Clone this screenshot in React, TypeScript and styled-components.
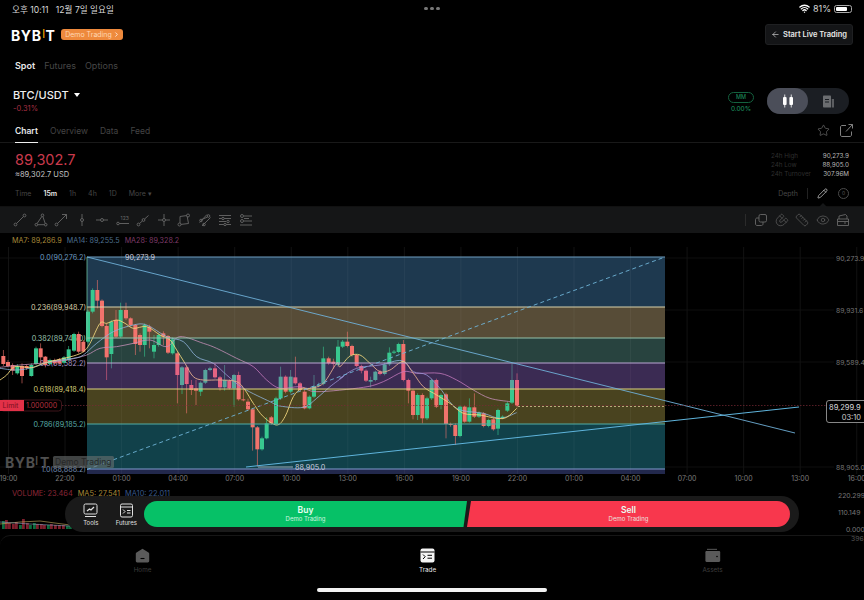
import React from "react";
import styled, { createGlobalStyle } from "styled-components";
import { ArrowLeft, ChevronRight, Eye, Magnet, Pencil, Ruler, Star, Wifi } from "lucide-react";

const GlobalStyle = createGlobalStyle`
  html, body {
    margin: 0;
    background: #000;
    overflow: hidden;
  }
  * { box-sizing: border-box; }
`;

const Page = styled.div`
  width: 864px;
  height: 600px;
  background: #000;
  color: #fff;
  font-family: Inter, "Noto Sans CJK KR", sans-serif;
  display: flex;
  flex-direction: column;
  overflow: hidden;
`;

const StatusBar = styled.div`
  height: 18px;
  padding: 0 12px 1px 12px;
  display: grid;
  grid-template-columns: 1fr auto 1fr;
  align-items: center;
  font-size: 8.6px;
  color: #d8d8d8;
`;
const Dots = styled.div`
  display: flex;
  gap: 2.5px;
  i {
    width: 3.5px;
    height: 3.5px;
    border-radius: 50%;
    background: #777;
  }
`;
const StatusRight = styled.div`
  display: flex;
  justify-content: flex-end;
  align-items: center;
  gap: 3px;
  font-size: 9px;
`;
const Battery = styled.div`
  width: 18px;
  height: 8px;
  border: 1px solid #aaa;
  border-radius: 2.5px;
  padding: 1px;
  position: relative;
  div {
    width: 81%;
    height: 100%;
    background: #fff;
    border-radius: 1px;
  }
`;

const Header = styled.div`
  height: 32px;
  padding: 0 11px 0 11px;
  display: flex;
  align-items: center;
  justify-content: space-between;
`;
const Brand = styled.div`
  display: flex;
  align-items: center;
  gap: 6px;
`;
const Logo = styled.div`
  font-size: 14px;
  font-weight: 700;
  letter-spacing: 0.6px;
  color: #fff;
  line-height: 1;
  padding-top: 3px;
  span {
    display: inline-block;
    color: #f7a600;
    font-size: 12px;
    font-weight: 600;
    transform: translateY(-3px) scaleX(0.7);
  }
`;
const DemoBadge = styled.div`
  height: 11px;
  width: 62px;
  background: #ee8a3d;
  color: #ffd8b4;
  font-size: 7px;
  border-radius: 3px;
  display: flex;
  align-items: center;
  justify-content: center;
  gap: 1px;
`;
const LiveButton = styled.div`
  width: 88px;
  height: 21px;
  background: #141517;
  border: 1px solid #1f2022;
  border-radius: 3px;
  display: flex;
  align-items: center;
  justify-content: center;
  gap: 3px;
  font-size: 7.5px;
  font-weight: 600;
  color: #e8e8e8;
`;

const MarketTabs = styled.div`
  height: 18px;
  margin-top: 6px;
  padding-left: 15px;
  display: flex;
  align-items: center;
  gap: 9px;
`;
const MarketTab = styled.div<{ $active?: boolean }>`
  font-size: 9px;
  font-weight: ${(p) => (p.$active ? 600 : 400)};
  color: ${(p) => (p.$active ? "#e8e8e8" : "#474747")};
`;

const PairRow = styled.div`
  height: 46px;
  padding: 14px 15px 0 13px;
  display: flex;
  align-items: flex-start;
  justify-content: space-between;
`;
const PairName = styled.div`
  font-size: 11px;
  font-weight: 500;
  color: #eee;
  display: flex;
  align-items: center;
  gap: 5px;
  &::after {
    content: "";
    border-left: 3.5px solid transparent;
    border-right: 3.5px solid transparent;
    border-top: 4px solid #fff;
  }
`;
const PairChange = styled.div`
  font-size: 7.5px;
  color: #a52f42;
  margin-top: 2px;
`;
const PairRight = styled.div`
  display: flex;
  align-items: center;
  gap: 13px;
`;
const MmBlock = styled.div`
  display: flex;
  flex-direction: column;
  align-items: center;
  gap: 2px;
  padding-top: 2px;
  font-size: 6.5px;
  color: #1f9a63;
`;
const MmBadge = styled.div`
  width: 26px;
  height: 11px;
  border: 1px solid #14613f;
  border-radius: 6px;
  font-size: 5.5px;
  display: flex;
  align-items: center;
  justify-content: center;
`;
const ViewToggle = styled.div`
  width: 82px;
  height: 26px;
  border-radius: 13px;
  background: #1b1e23;
  display: flex;
`;
const ToggleSide = styled.div<{ $on?: boolean }>`
  width: 41px;
  height: 26px;
  border-radius: 13px;
  background: ${(p) => (p.$on ? "#4b4e59" : "transparent")};
  display: flex;
  align-items: center;
  justify-content: center;
`;

const ChartTabs = styled.div`
  height: 23px;
  padding: 0 11px 0 15px;
  border-bottom: 1px solid #191919;
  display: flex;
  align-items: stretch;
  justify-content: space-between;
`;
const TabList = styled.div`
  display: flex;
  gap: 12px;
`;
const ChartTab = styled.div<{ $active?: boolean }>`
  font-size: 8.5px;
  font-weight: ${(p) => (p.$active ? 600 : 400)};
  color: ${(p) => (p.$active ? "#e8e8e8" : "#444")};
  border-bottom: 1px solid ${(p) => (p.$active ? "#eee" : "transparent")};
  display: flex;
  align-items: center;
  padding-bottom: 1px;
  margin-bottom: -1px;
`;
const TabActions = styled.div`
  display: flex;
  align-items: center;
  gap: 10px;
  color: #808080;
  padding-bottom: 1px;
`;

const PriceRow = styled.div`
  height: 43px;
  padding: 7px 15px 0 15px;
  display: flex;
  justify-content: space-between;
`;
const LastPrice = styled.div`
  font-size: 14.5px;
  line-height: 20px;
  color: #c93a4c;
`;
const FiatPrice = styled.div`
  font-size: 7.5px;
  color: #c4c4c4;
`;
const Stats = styled.div`
  width: 78px;
  height: 28px;
  padding-top: 2px;
  display: grid;
  grid-template-columns: 1fr auto;
  align-content: start;
  font-size: 6.3px;
  line-height: 8.8px;
`;
const StatLabel = styled.div`
  color: #2f2f2f;
`;
const StatValue = styled.div`
  color: #b8b8b8;
  text-align: right;
`;

const TimeRow = styled.div`
  height: 20px;
  padding: 0 15px 6px 15px;
  display: flex;
  align-items: center;
  justify-content: space-between;
  font-size: 7px;
  color: #474747;
`;
const TimeList = styled.div`
  display: flex;
  gap: 12px;
`;
const TimeItem = styled.div<{ $active?: boolean }>`
  color: ${(p) => (p.$active ? "#e8e8e8" : "#474747")};
  font-weight: ${(p) => (p.$active ? 600 : 400)};
`;
const TimeTools = styled.div`
  display: flex;
  align-items: center;
`;
const DepthLabel = styled.span`
  margin-right: 9px;
`;
const VLine = styled.div`
  width: 1px;
  height: 11px;
  background: #222;
`;
const PencilBox = styled.div`
  margin: 0 0 0 9px;
  width: 12px;
  color: #e4e4e4;
  display: flex;
`;
const CircleBadge = styled.div`
  margin-left: 9px;
  width: 11px;
  height: 11px;
  border: 1px solid #4a4a4a;
  border-radius: 50%;
  font-size: 5px;
  color: #5a5a5a;
  display: flex;
  align-items: center;
  justify-content: center;
`;

const Toolbar = styled.div`
  height: 27px;
  background: #151617;
  border-top: 1px solid #111;
  padding: 0 14px 0 13px;
  display: flex;
  align-items: center;
  justify-content: space-between;
  position: relative;
  &::before {
    content: "";
    position: absolute;
    top: -4px;
    left: 819px;
    border-left: 4px solid transparent;
    border-right: 4px solid transparent;
    border-bottom: 4px solid #151617;
  }
`;
const ToolGroup = styled.div`
  display: flex;
  align-items: center;
  gap: 6.5px;
`;
const ToolIcon = styled.svg`
  width: 14px;
  height: 14px;
  fill: none;
  stroke: #686868;
  stroke-width: 0.9;
  display: block;
`;
const ToolDivider = styled.div`
  width: 1px;
  height: 12px;
  background: #2b2b2b;
  margin-right: 2px;
`;
const MagnetIcon = styled(Magnet)`
  transform: rotate(180deg);
`;

const Legend = styled.div`
  height: 14px;
  padding-left: 12px;
  display: flex;
  align-items: center;
  gap: 5px;
  font-size: 7.2px;
`;
const LegendItem = styled.span<{ $color: string }>`
  color: ${(p) => p.$color};
`;
const ChartSvg = styled.svg`
  display: block;
  width: 864px;
  height: 240px;
`;
const SvgLabel = styled.text<{ $size?: number; $color: string; $weight?: number }>`
  font-family: Inter, sans-serif;
  font-size: ${(p) => p.$size ?? 7.2}px;
  font-weight: ${(p) => p.$weight ?? 400};
  fill: ${(p) => p.$color};
`;

const VolumePanel = styled.div`
  height: 48px;
  position: relative;
`;
const VolumeLegend = styled(Legend)`
  height: 12px;
  padding-top: 1px;
  font-size: 7.4px;
`;
const VolumeSvg = styled.svg`
  display: block;
  width: 864px;
  height: 36px;
  overflow: visible;
`;
const TradeBar = styled.div`
  position: absolute;
  left: 65px;
  top: 9px;
  width: 734px;
  height: 36px;
  border-radius: 18px;
  background: #1a1a1a;
  display: flex;
  align-items: center;
`;
const BarTools = styled.div`
  width: 79px;
  padding-left: 8px;
  display: flex;
`;
const BarTool = styled.div`
  width: 35.5px;
  display: flex;
  flex-direction: column;
  align-items: center;
  gap: 1px;
  font-size: 6px;
  color: #e0e0e0;
`;
const TradeButton = styled.div<{ $side: "buy" | "sell" }>`
  width: 323px;
  height: 26px;
  background: ${(p) => (p.$side === "buy" ? "#06c167" : "#f8374d")};
  border-radius: ${(p) => (p.$side === "buy" ? "13px 0 0 13px" : "0 13px 13px 0")};
  clip-path: ${(p) =>
    p.$side === "buy"
      ? "polygon(0 0, 100% 0, calc(100% - 3.5px) 100%, 0 100%)"
      : "polygon(4px 0, 100% 0, 100% 100%, 0 100%)"};
  display: flex;
  flex-direction: column;
  align-items: center;
  justify-content: center;
  color: #e9fff3;
  b {
    font-size: 8.5px;
    font-weight: 600;
    line-height: 10px;
  }
  span {
    font-size: 6px;
    line-height: 8px;
    opacity: 0.85;
  }
`;

const BottomNav = styled.div`
  height: 65px;
  border-top: 1px solid #161616;
  border-radius: 10px 10px 0 0;
  display: flex;
  flex-direction: column;
  align-items: center;
`;
const NavItems = styled.div`
  width: 100%;
  padding-top: 12px;
  display: grid;
  grid-template-columns: repeat(3, 285px);
`;
const NavItem = styled.div<{ $active?: boolean }>`
  display: flex;
  flex-direction: column;
  align-items: center;
  gap: 3px;
  font-size: 6.3px;
  color: ${(p) => (p.$active ? "#e8e8e8" : "#3f3f3f")};
`;
const HomeBar = styled.div`
  width: 230px;
  height: 4px;
  margin-top: 14px;
  background: #f2f2f2;
  border-radius: 2px;
`;

type Row = [number, number, number, number, number, number];

// values read off the chart: x in px, then body top/bottom and wick top/bottom. last one 1 = green
const rowsA: Row[] = [
  [10, 228, 252, 210, 258, 0], [24, 246, 258, 240, 262, 0], [38, 255, 272, 250, 285, 0], [52, 258, 280, 252, 284, 1],
  [66, 258, 288, 250, 310, 0], [80, 258, 264, 254, 270, 0], [94, 255, 288, 250, 290, 1], [108, 205, 252, 200, 256, 1],
  [122, 205, 232, 190, 250, 0], [136, 230, 255, 228, 262, 0], [150, 240, 252, 236, 256, 1], [164, 240, 250, 236, 254, 0],
  [178, 238, 250, 234, 254, 0], [192, 232, 248, 228, 252, 1], [206, 208, 240, 198, 244, 1], [222, 162, 212, 158, 216, 1],
  [236, 162, 215, 155, 220, 0], [250, 185, 215, 180, 218, 0], [264, 95, 185, 90, 190, 1], [278, 30, 95, 25, 100, 1],
  [292, 30, 62, 0, 85, 0], [306, 62, 138, 58, 142, 0], [320, 138, 232, 130, 300, 0], [334, 125, 222, 120, 265, 1],
  [348, 120, 170, 90, 174, 0], [362, 90, 170, 68, 174, 1], [378, 90, 115, 68, 120, 0], [392, 115, 135, 112, 140, 0],
  [406, 135, 192, 132, 225, 0], [420, 165, 195, 160, 215, 0], [434, 135, 195, 130, 230, 1], [448, 140, 155, 134, 205, 0],
  [462, 195, 215, 165, 235, 1], [476, 165, 195, 160, 200, 1], [490, 160, 170, 154, 195, 0], [504, 168, 218, 165, 222, 0],
  [518, 178, 220, 172, 224, 1],
];
const rowsB: Row[] = [
  [22, 100, 165, 96, 250, 0], [36, 142, 195, 138, 222, 1], [50, 142, 192, 138, 280, 0], [64, 195, 210, 180, 225, 0],
  [78, 205, 212, 180, 255, 0], [92, 188, 215, 184, 228, 1], [106, 150, 188, 146, 192, 1], [120, 145, 150, 140, 154, 1],
  [135, 145, 172, 130, 176, 0], [150, 172, 202, 168, 212, 0], [164, 180, 202, 135, 212, 1], [178, 182, 205, 178, 208, 0],
  [192, 165, 205, 162, 260, 1], [206, 165, 238, 155, 242, 0], [220, 238, 241, 205, 244, 0], [234, 245, 268, 236, 272, 0],
  [248, 268, 322, 264, 392, 0], [262, 322, 388, 318, 440, 0], [276, 355, 388, 350, 392, 1], [290, 310, 355, 292, 358, 1],
  [304, 292, 310, 288, 314, 0], [318, 235, 312, 230, 316, 1], [332, 170, 235, 140, 240, 1], [347, 170, 215, 166, 220, 0],
  [362, 170, 215, 150, 220, 1], [376, 172, 190, 110, 194, 0], [390, 190, 210, 186, 214, 0], [404, 215, 265, 210, 268, 0],
  [418, 230, 265, 226, 268, 1], [432, 198, 230, 165, 234, 1], [446, 195, 198, 188, 202, 1], [460, 115, 192, 80, 196, 1],
  [476, 115, 130, 110, 134, 0], [490, 125, 132, 116, 146, 0], [504, 80, 135, 60, 140, 1],
];
const rowsC: Row[] = [
  [8, 35, 50, 30, 54, 1], [22, 35, 48, 5, 52, 0], [36, 48, 75, 44, 80, 0], [50, 75, 108, 72, 112, 0], [64, 108, 122, 104, 130, 0],
  [78, 122, 152, 118, 156, 0], [92, 150, 155, 140, 172, 1], [106, 125, 150, 122, 154, 1], [120, 125, 132, 120, 136, 0],
  [134, 103, 132, 98, 136, 1], [148, 68, 103, 52, 108, 1], [162, 65, 68, 60, 72, 1], [176, 42, 66, 38, 70, 1],
  [190, 42, 150, 30, 154, 0], [205, 150, 182, 146, 220, 0], [219, 182, 255, 178, 268, 0], [233, 195, 255, 190, 270, 1],
  [247, 195, 265, 190, 280, 0], [261, 205, 265, 200, 270, 1], [275, 150, 205, 146, 210, 1], [289, 150, 230, 146, 234, 0],
  [303, 195, 225, 190, 238, 1], [318, 193, 282, 188, 325, 0], [332, 282, 285, 278, 290, 0], [346, 285, 318, 280, 345, 0],
  [360, 230, 318, 226, 322, 1], [374, 230, 275, 226, 278, 0], [388, 232, 275, 205, 278, 1], [403, 232, 260, 190, 264, 0],
  [417, 248, 260, 244, 264, 1], [431, 250, 288, 246, 292, 0], [446, 270, 288, 266, 292, 1], [460, 268, 298, 264, 302, 0],
  [474, 240, 296, 236, 315, 1], [488, 260, 264, 256, 268, 1], [502, 220, 242, 216, 246, 1], [516, 150, 218, 100, 222, 1],
  [531, 150, 228, 130, 232, 0],
];

const place = (rows: Row[], ox: number, oy: number) =>
  rows.map(([v, t, b, wt, wb, g]) => ({
    x: ox + v / 3,
    top: oy + t / 3,
    bottom: oy + b / 3,
    high: oy + wt / 3,
    low: oy + wb / 3,
    up: g === 1,
  }));

const candles = [...place(rowsA, 0, 280), ...place(rowsB, 170, 320), ...place(rowsC, 340, 330)];

const toPath = (parts: [number, number, number[]][]) => {
  const pts: number[][] = [];
  parts.forEach(([ox, oy, flat]) => {
    for (let i = 0; i < flat.length; i += 2) pts.push([ox + flat[i] / 3, oy + flat[i + 1] / 3]);
  });
  let d = `M${pts[0][0]} ${pts[0][1]}`;
  for (let i = 0; i < pts.length - 1; i++) {
    const p0 = pts[i - 1] || pts[i];
    const p1 = pts[i];
    const p2 = pts[i + 1];
    const p3 = pts[i + 2] || p2;
    d += ` C${p1[0] + (p2[0] - p0[0]) / 6} ${p1[1] + (p2[1] - p0[1]) / 6} ${p2[0] - (p3[0] - p1[0]) / 6} ${p2[1] - (p3[1] - p1[1]) / 6} ${p2[0]} ${p2[1]}`;
  }
  return d;
};

const ma7 = toPath([
  [0, 280, [0, 300, 20, 285, 40, 262, 60, 260, 80, 262, 100, 262, 130, 250, 170, 240, 220, 228, 250, 215, 270, 190, 300, 130, 320, 130, 350, 120, 375, 130, 400, 145, 440, 140, 480, 165, 510, 180]],
  [170, 320, [20, 90, 45, 130, 70, 170, 100, 180, 150, 180, 200, 185, 225, 210, 250, 250, 280, 290, 320, 315, 345, 290, 370, 230, 395, 205, 420, 205, 460, 190, 500, 130]],
  [340, 330, [0, 110, 30, 78, 60, 75, 90, 100, 120, 125, 150, 120, 190, 95, 220, 130, 250, 170, 290, 195, 330, 220, 370, 250, 420, 255, 470, 265, 500, 262, 530, 235]],
]);
const ma14 = toPath([
  [0, 280, [0, 265, 50, 270, 100, 262, 150, 245, 220, 235, 250, 225, 290, 190, 340, 155, 400, 135, 440, 135, 500, 170]],
  [170, 320, [40, 65, 80, 110, 130, 130, 170, 165, 220, 205, 300, 245, 330, 258, 400, 262, 440, 235, 480, 200, 520, 170]],
  [340, 330, [0, 145, 50, 115, 120, 105, 185, 92, 220, 125, 260, 135, 300, 175, 350, 235, 430, 250, 480, 265, 530, 248]],
]);
const ma28 = toPath([
  [0, 280, [0, 262, 60, 255, 120, 250, 200, 240, 260, 225, 300, 205, 350, 200, 400, 190, 450, 180, 500, 200]],
  [170, 320, [30, 50, 100, 70, 140, 85, 200, 115, 250, 140, 290, 180, 330, 205, 390, 200, 440, 215]],
  [340, 330, [70, 172, 130, 155, 190, 125, 230, 130, 300, 130, 350, 150, 400, 180, 450, 205, 510, 215]],
]);

const bands = [
  { top: 257, bottom: 307, fill: "#1e394f", line: "#6f9fc2", label: "0.0(90,276.2)", text: "#6d9cc0" },
  { top: 307, bottom: 338, fill: "#574c37", line: "#d9d2ac", label: "0.236(89,948.7)", text: "#d8cfa8" },
  { top: 338, bottom: 363, fill: "#28433f", line: "#94c2ab", label: "0.382(89,746.0)", text: "#9cc4b0" },
  { top: 363, bottom: 389, fill: "#13292f", tint: "rgba(190,50,200,.24)", line: "#baa7d4", label: "0.5(89,582.2)", text: "#a994c8" },
  { top: 389, bottom: 424, fill: "#49431f", line: "#dcd47e", label: "0.618(89,418.4)", text: "#d4cc78" },
  { top: 424, bottom: 469, fill: "#11414a", line: "#52ada5", label: "0.786(89,185.2)", text: "#5aaca8" },
  { top: 469, bottom: 474, fill: "#22284c", line: "#8299cf", label: "1.0(88,888.2)", text: "#7088b0" },
];

const gridX = Array.from({ length: 16 }, (_, i) => 8.5 + i * 56.55);
const timeLabels = ["19:00", "22:00", "01:00", "04:00", "07:00", "10:00", "13:00", "16:00", "19:00", "22:00", "01:00", "04:00", "07:00", "10:00", "13:00", "16:00"];

const Chart = () => (
  <ChartSvg viewBox="0 247 864 240">
    {gridX.map((x) => (
      <line key={x} x1={x} x2={x} y1={247} y2={474} stroke="#1a1a1a" strokeWidth={0.7} />
    ))}
    {[258, 310, 362, 467].map((y) => (
      <line key={y} x1={0} x2={834} y1={y} y2={y} stroke="#141414" strokeWidth={0.7} />
    ))}
    {bands.map((b) => (
      <rect key={b.label} x={87} y={b.top} width={578} height={b.bottom - b.top} fill={b.fill} />
    ))}
    {gridX
      .filter((x) => x > 87 && x < 665)
      .map((x) => (
        <line key={x} x1={x} x2={x} y1={257} y2={474} stroke="rgba(255,255,255,.07)" strokeWidth={0.7} />
      ))}
    {bands.map((b) => (
      <SvgLabel key={b.label} x={86} y={b.top + 2.6} textAnchor="end" $color={b.text}>
        {b.label}
      </SvgLabel>
    ))}
    {candles.map((c) => (
      <g key={`${c.x}-${c.top}`} fill={c.up ? "#38c88f" : "#f2736c"}>
        <rect x={c.x - 0.4} y={c.high} width={0.8} height={c.low - c.high} opacity={0.75} />
        <rect x={c.x - 2} y={c.top} width={4} height={Math.max(c.bottom - c.top, 1)} />
      </g>
    ))}
    <path d={ma28} fill="none" stroke="#c58fb8" strokeWidth={0.8} />
    <path d={ma14} fill="none" stroke="#8fb4dc" strokeWidth={0.8} />
    <path d={ma7} fill="none" stroke="#ecd27a" strokeWidth={0.9} />
    {bands
      .filter((b) => b.tint)
      .map((b) => (
        <rect key={b.label} x={87} y={b.top} width={578} height={b.bottom - b.top} fill={b.tint} />
      ))}
    {bands.map((b) => (
      <line key={b.label} x1={87} x2={665} y1={b.top} y2={b.top} stroke={b.line} strokeWidth={1} />
    ))}
    <line x1={87} x2={87} y1={257} y2={340} stroke="#6cc0a0" strokeWidth={0.8} />
    <line x1={87} x2={665} y1={469.5} y2={257} stroke="#6fb4d8" strokeWidth={0.9} strokeDasharray="4 3" />
    <line x1={87} x2={795} y1={257} y2={433} stroke="#6fb0d8" strokeWidth={0.9} />
    <line x1={246} x2={799} y1={467} y2={407} stroke="#5fb4dc" strokeWidth={1} />
    <line x1={258} x2={293} y1={467} y2={467} stroke="#dde" strokeWidth={0.7} />
    <line x1={62} x2={830} y1={405.5} y2={405.5} stroke="#7a2a35" strokeWidth={0.7} strokeDasharray="1.5 1.5" />
    <line x1={518} x2={665} y1={406.5} y2={406.5} stroke="#e8d9a0" strokeWidth={0.7} strokeDasharray="2 2" />
    <SvgLabel x={125} y={260} $color="#ccd">90,273.9</SvgLabel>
    <SvgLabel x={295} y={469.5} $color="#ccd">88,905.0</SvgLabel>

    <rect x={0.5} y={400} width={61} height={11} rx={3} fill="#000" stroke="#4e1a22" strokeWidth={0.8} />
    <path d="M0 400 H24 V411 H0 Z" fill="#e23148" />
    <SvgLabel x={2.5} y={408.2} $size={7} $color="#7a0f20">Limit</SvgLabel>
    <SvgLabel x={26} y={408.2} $size={7} $color="#b5303f">1.000000</SvgLabel>

    <SvgLabel x={5} y={468} $size={14} $weight={700} $color="#6a6a6a" opacity={0.75} letterSpacing={0.6}>BYB</SvgLabel>
    <SvgLabel x={35} y={465} $size={12} $weight={500} $color="#6a6a6a" opacity={0.75}>I</SvgLabel>
    <SvgLabel x={40} y={468} $size={14} $weight={700} $color="#6a6a6a" opacity={0.75}>T</SvgLabel>
    <rect x={53} y={456} width={61} height={12} rx={1.5} fill="#6a6f70" opacity={0.6} />
    <SvgLabel x={55} y={465} $size={8.5} $color="#222" opacity={0.85}>Demo Trading</SvgLabel>

    {timeLabels.map((t, i) => (
      <SvgLabel key={i} x={gridX[i]} y={481} textAnchor="middle" $size={7} $color="#7a7a7a">
        {t}
      </SvgLabel>
    ))}
    <SvgLabel x={836} y={260.5} $size={6.8} $color="#777">90,273.9</SvgLabel>
    <SvgLabel x={836} y={312.5} $size={6.8} $color="#777">89,931.6</SvgLabel>
    <SvgLabel x={836} y={364.5} $size={6.8} $color="#777">89,589.4</SvgLabel>
    <SvgLabel x={836} y={469.5} $size={6.8} $color="#777">88,905.0</SvgLabel>

    <rect x={826.5} y={400.5} width={44} height={22} rx={2.5} fill="#000" stroke="#aaa" strokeWidth={0.8} />
    <SvgLabel x={829} y={409.5} $size={7.5} $color="#ddd">89,299.9</SvgLabel>
    <SvgLabel x={861} y={419.5} $size={7.5} $color="#ccc" textAnchor="end">03:10</SvgLabel>
  </ChartSvg>
);

const volumeBars = [
  [2, 521, 1], [5, 520, 0], [8, 523, 0], [12, 524, 0], [15, 522, 0], [19, 525, 1], [22, 519, 0], [26, 523, 0], [29, 525, 1], [33, 523, 1],
  [36, 524, 0], [40, 524, 0], [43, 525, 0], [47, 525, 1], [50, 524, 0], [54, 525, 0], [58, 525, 0], [62, 525, 0], [66, 526, 1], [69, 525, 1],
];

const Volume = () => (
  <VolumeSvg viewBox="0 499 864 36">
    {volumeBars.map(([x, y, up]) => (
      <rect key={x} x={x} y={y} width={2.8} height={529 - y} fill={up ? "#0e6a3e" : "#7c1f2c"} />
    ))}
    <polyline points="0,524 20,522 40,521 70,525" fill="none" stroke="#c9b060" strokeWidth={0.6} />
    <polyline points="0,522 30,524 70,526" fill="none" stroke="#8aa0c0" strokeWidth={0.6} />
    <SvgLabel x={838} y={497.5} $size={6.8} $color="#777">220.299</SvgLabel>
    <SvgLabel x={838} y={514.5} $size={6.8} $color="#777">110.149</SvgLabel>
    <SvgLabel x={846} y={531.5} $size={6.8} $color="#777">0.000</SvgLabel>
    <SvgLabel x={851} y={540.5} $size={6.8} $color="#555">396</SvgLabel>
  </VolumeSvg>
);

const Tool = ({ children }: { children: React.ReactNode }) => <ToolIcon viewBox="0 0 14 14">{children}</ToolIcon>;

const leftTools = [
  <><circle cx="2.5" cy="11.5" r="1.4" /><circle cx="11.5" cy="2.5" r="1.4" /><path d="M3.5 10.5 10.5 3.5" /></>,
  <><circle cx="2.3" cy="11.7" r="1.3" /><circle cx="11.7" cy="11.7" r="1.3" /><circle cx="8.5" cy="2.3" r="1.3" /><path d="M3.6 11.7H10.4M3 10.6 7.9 3.4M8.9 3.6 11.2 10.4" /></>,
  <><circle cx="2.5" cy="11.5" r="1.4" /><path d="M3.5 10.5 12.5 1.5M8 1.5H12.5V6" /></>,
  <><circle cx="7" cy="7" r="1.5" /><path d="M7 1V5.5M7 8.5V13" /></>,
  <><circle cx="7" cy="7" r="1.5" /><path d="M1 7H5.5M8.5 7H13" /></>,
  <><circle cx="2" cy="10.5" r="1.3" /><path d="M3.3 10.5H13" /><text x="4.6" y="7" fontSize="5" fill="#686868" stroke="none" fontFamily="Inter, sans-serif">123</text></>,
  <><circle cx="2.5" cy="11.5" r="1.4" /><circle cx="7.5" cy="7" r="1.4" /><path d="M3.5 10.5 6.4 8M8.6 6 12.5 2.5" /></>,
  <><circle cx="7" cy="7" r="1.5" /><path d="M7 1V5.5M7 8.5V13M1 7H5.5M8.5 7H13" /></>,
  <><path d="M3 3.5 10 2.5 11.5 10.5 3 11.5Z" /><circle cx="11" cy="2.5" r="1.5" fill="#151617" /><circle cx="2.5" cy="11.5" r="1.5" fill="#151617" /></>,
  <><circle cx="3" cy="7.5" r="1.3" /><circle cx="10.5" cy="3" r="1.3" /><circle cx="6" cy="11.5" r="1.3" /><path d="M1.5 9.5 9 1.5M4 13 12.5 4.5M4 6.5 9.5 4" /></>,
  <><path d="M1 2.5H13M1 5.5H13M1 8.5H8M1 11.5H13" /><circle cx="5" cy="5.5" r="1.2" fill="#151617" /><circle cx="10" cy="8.5" r="1.2" fill="#151617" /><circle cx="7" cy="11.5" r="1.2" fill="#151617" /></>,
  <><circle cx="3" cy="3" r="1.5" /><circle cx="3" cy="8" r="1.5" /><path d="M5 3H13M5 8H13M1 12H13M5 5.5H10" /></>,
];

const TimeFrames = ["Time", "15m", "1h", "4h", "1D", "More ▾"];

export default function App() {
  return (
    <Page>
      <GlobalStyle />
      <StatusBar>
        <div>오후 10:11 &nbsp; 12월 7일 일요일</div>
        <Dots><i /><i /><i /></Dots>
        <StatusRight>
          <Wifi size={11} color="#fff" strokeWidth={3} />
          <span>81%</span>
          <Battery><div /></Battery>
        </StatusRight>
      </StatusBar>

      <Header>
        <Brand>
          <Logo>BYB<span>I</span>T</Logo>
          <DemoBadge>Demo Trading <ChevronRight size={7} strokeWidth={2.5} color="#fff" /></DemoBadge>
        </Brand>
        <LiveButton><ArrowLeft size={9} strokeWidth={1.6} /> Start Live Trading</LiveButton>
      </Header>

      <MarketTabs>
        <MarketTab $active>Spot</MarketTab>
        <MarketTab>Futures</MarketTab>
        <MarketTab>Options</MarketTab>
      </MarketTabs>

      <PairRow>
        <div>
          <PairName>BTC/USDT</PairName>
          <PairChange>-0.31%</PairChange>
        </div>
        <PairRight>
          <MmBlock>
            <MmBadge>MM</MmBadge>
            0.00%
          </MmBlock>
          <ViewToggle>
            <ToggleSide $on>
              <svg width="12" height="14" viewBox="0 0 12 14" fill="#fff">
                <rect x="1" y="3" width="3.6" height="8" rx="1" />
                <rect x="2.4" y="0.5" width="0.8" height="13" />
                <rect x="7.4" y="3" width="3.6" height="8" rx="1" />
                <rect x="8.8" y="0.5" width="0.8" height="13" />
              </svg>
            </ToggleSide>
            <ToggleSide>
              <svg width="13" height="13" viewBox="0 0 13 13">
                <path d="M1 1.5C1 1 1.4 .5 2 .5H8C8.6.5 9 1 9 1.5V12.5H2C1.4 12.5 1 12 1 11.5Z" fill="#6b6d70" />
                <path d="M3 4.5H7M3 7H7" stroke="#1b1e23" strokeWidth="1" />
                <path d="M9.8 4H12V12.5H9.8Z" fill="#5b5d60" />
              </svg>
            </ToggleSide>
          </ViewToggle>
        </PairRight>
      </PairRow>

      <ChartTabs>
        <TabList>
          <ChartTab $active>Chart</ChartTab>
          <ChartTab>Overview</ChartTab>
          <ChartTab>Data</ChartTab>
          <ChartTab>Feed</ChartTab>
        </TabList>
        <TabActions>
          <Star size={13} strokeWidth={1.1} />
          <svg width="13" height="13" viewBox="0 0 13 13" fill="none" stroke="#808080" strokeWidth="1">
            <path d="M6 1.5H2C1.2 1.5.5 2.2.5 3V11C.5 11.8 1.2 12.5 2 12.5H10C10.8 12.5 11.5 11.8 11.5 11V7.5" />
            <path d="M6 7.5 12.5.5M8.5.5H12.5V4.5" />
          </svg>
        </TabActions>
      </ChartTabs>

      <PriceRow>
        <div>
          <LastPrice>89,302.7</LastPrice>
          <FiatPrice>≈89,302.7 USD</FiatPrice>
        </div>
        <Stats>
          <StatLabel>24h High</StatLabel><StatValue>90,273.9</StatValue>
          <StatLabel>24h Low</StatLabel><StatValue>88,905.0</StatValue>
          <StatLabel>24h Turnover</StatLabel><StatValue>307.96M</StatValue>
        </Stats>
      </PriceRow>

      <TimeRow>
        <TimeList>
          {TimeFrames.map((t) => (
            <TimeItem key={t} $active={t === "15m"}>{t}</TimeItem>
          ))}
        </TimeList>
        <TimeTools>
          <DepthLabel>Depth</DepthLabel>
          <VLine />
          <PencilBox><Pencil size={11} strokeWidth={1.4} /></PencilBox>
          <CircleBadge>0</CircleBadge>
        </TimeTools>
      </TimeRow>

      <Toolbar>
        <ToolGroup>
          {leftTools.map((t, i) => (
            <Tool key={i}>{t}</Tool>
          ))}
        </ToolGroup>
        <ToolGroup>
          <ToolDivider />
          <Tool>
            <rect x="5" y="1.5" width="7.5" height="7.5" rx="1.5" />
            <path d="M5 5H3C2.2 5 1.5 5.7 1.5 6.5V11C1.5 11.8 2.2 12.5 3 12.5H7.5C8.3 12.5 9 11.8 9 11V9" />
          </Tool>
          <MagnetIcon size={14} color="#686868" strokeWidth={1.1} />
          <Ruler size={14} color="#686868" strokeWidth={1.1} />
          <Eye size={14} color="#686868" strokeWidth={1.1} />
          <Tool>
            <path d="M1.5 6H12.5V12.5H1.5ZM3 6V3L9.5 1.5 11 3V6M1.5 8.5H12.5M9 9V11" />
          </Tool>
        </ToolGroup>
      </Toolbar>

      <Legend>
        <LegendItem $color="#a98a3a">MA7: 89,286.9</LegendItem>
        <LegendItem $color="#4d6f8f">MA14: 89,255.5</LegendItem>
        <LegendItem $color="#7d3a68">MA28: 89,328.2</LegendItem>
      </Legend>
      <Chart />

      <VolumePanel>
        <VolumeLegend>
          <LegendItem $color="#8a2636">VOLUME: 23.464</LegendItem>
          <LegendItem $color="#a98a3a">MA5: 27.541</LegendItem>
          <LegendItem $color="#39598a">MA10: 22.011</LegendItem>
        </VolumeLegend>
        <Volume />
        <TradeBar>
          <BarTools>
            <BarTool>
              <svg width="15" height="15" viewBox="0 0 15 15" fill="none" stroke="#e0e0e0" strokeWidth="1">
                <rect x="1" y="1" width="13" height="10" rx="1.5" />
                <path d="M4 8 6.5 6 8 7 11 4" strokeWidth="1.3" />
                <path d="M2 13.5H13" />
              </svg>
              Tools
            </BarTool>
            <BarTool>
              <svg width="15" height="15" viewBox="0 0 15 15" fill="none" stroke="#e0e0e0" strokeWidth="1">
                <rect x="1.5" y="1" width="12" height="13" rx="1.5" />
                <path d="M1.5 4H13.5M4 6.5 6 8.5 4 10.5M8 7.5H11.5M8 10H11.5" />
              </svg>
              Futures
            </BarTool>
          </BarTools>
          <TradeButton $side="buy"><b>Buy</b><span>Demo Trading</span></TradeButton>
          <TradeButton $side="sell"><b>Sell</b><span>Demo Trading</span></TradeButton>
        </TradeBar>
      </VolumePanel>

      <BottomNav>
        <NavItems>
          <NavItem>
            <svg width="15" height="15" viewBox="0 0 15 15">
              <path d="M7.5.8 13.5 4.5C14 4.8 14.2 5.2 14.2 5.8V13C14.2 13.8 13.6 14.4 12.8 14.4H2.2C1.4 14.4.8 13.8.8 13V5.8C.8 5.2 1 4.8 1.5 4.5Z" fill="#5a5a5a" />
              <path d="M5.5 10.5H9.5" stroke="#000" strokeWidth="1.1" />
            </svg>
            Home
          </NavItem>
          <NavItem $active>
            <svg width="15" height="15" viewBox="0 0 15 15">
              <rect x="0.5" y="0.5" width="14" height="14" rx="2" fill="#f4f4f4" />
              <path d="M.5 4H14.5M3 6.5 5.2 8.7 3 11M7.5 7.3H12M7.5 10.2H12" stroke="#000" strokeWidth="1" fill="none" />
            </svg>
            Trade
          </NavItem>
          <NavItem>
            <svg width="16" height="15" viewBox="0 0 16 15">
              <path d="M2 .8H12V2H2Z" fill="#4a4a4a" />
              <path d="M1.5 3H14C14.6 3 15.2 3.6 15.2 4.2V12.8C15.2 13.5 14.6 14 14 14H1.5C.9 14 .4 13.5.4 12.8V4.2C.4 3.6.9 3 1.5 3Z" fill="#5a5a5a" />
              <circle cx="12" cy="8.5" r="0.8" fill="#000" />
            </svg>
            Assets
          </NavItem>
        </NavItems>
        <HomeBar />
      </BottomNav>
    </Page>
  );
}
